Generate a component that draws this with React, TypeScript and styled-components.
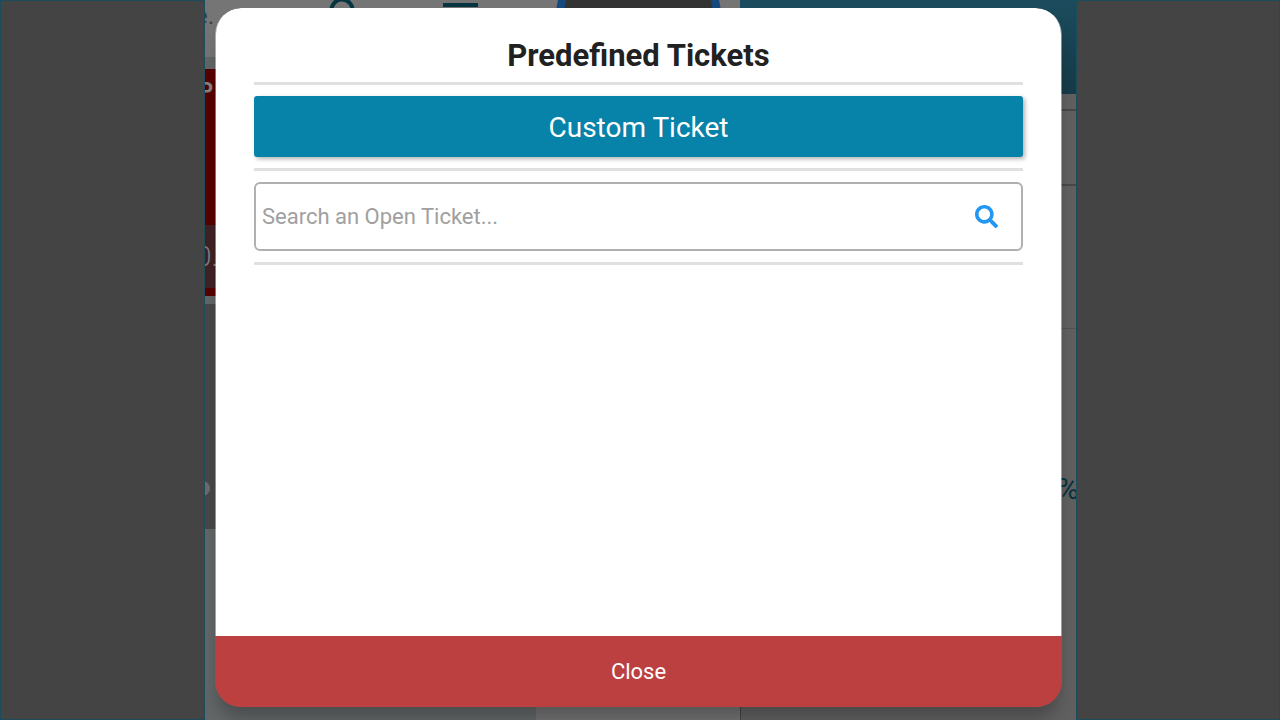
import React from "react";
import styled, { createGlobalStyle } from "styled-components";
import { FaSearch } from "react-icons/fa";

const GlobalStyle = createGlobalStyle`
  *, *::before, *::after { box-sizing: border-box; }
  body { margin: 0; font-family: Roboto, "Liberation Sans", sans-serif; }
  button, input { font-family: inherit; }
`;

const Screen = styled.div`
  display: grid;
  grid-template-columns: 205px 1fr 204px;
  height: 100vh;
  min-height: 420px;
  overflow: hidden;
`;

const Bezel = styled.div`
  background: #444;
  border: 1px solid #1b4c5b;
`;

const Frame = styled.div`
  position: relative;
  display: grid;
  min-width: 0;
  overflow: hidden;
`;

const Register = styled.main`
  display: grid;
  grid-template-columns: 1fr 336px;
  min-width: 0;
  overflow: hidden;
`;

const Catalog = styled.section`
  display: flex;
  flex-direction: column;
  margin-left: -16px;
  min-width: 0;
  background: #626666;
`;

const CatalogHeader = styled.header`
  display: flex;
  flex: none;
  height: 57px;
  margin-bottom: 12px;
  padding-left: 6px;
  background: #757575;
  color: #3c3f40;
  font-size: 24px;
  line-height: 32px;
`;

const HeaderIcons = styled.svg`
  flex: none;
  width: 410px;
  height: 57px;
  margin-left: 110px;
`;

const ProductCard = styled.article`
  flex: none;
  height: 227px;
  margin-bottom: 8px;
  background: #580000;
  color: #858585;
`;

const ProductName = styled.div`
  height: 156px;
  padding: 8px 10px;
  font-size: 22px;
  font-weight: 700;
  line-height: 28px;
`;

const ProductPrice = styled.div`
  height: 63px;
  padding-left: 7px;
  background: #402225;
  color: #808080;
  font-size: 28px;
  font-weight: 300;
  line-height: 64px;
`;

const OptionCard = styled.article`
  flex: none;
  height: 225px;
  padding: 177px 6px 0;
  background: #484848;
`;

const Knob = styled.div`
  width: 15px;
  height: 15px;
  border-radius: 8px;
  background: #6c6c6c;
`;

const CatalogFooter = styled.footer`
  flex: none;
  width: 204px;
  height: 24px;
  margin-top: auto;
  align-self: flex-end;
  background: #727272;
`;

const Order = styled.section`
  display: flex;
  flex-direction: column;
  background: #606060;
  border-left: 1px solid #444;
`;

const OrderHeader = styled.header`
  flex: none;
  height: 94px;
  margin-left: -1px;
  background: linear-gradient(#1b4c5d, #163a48);
`;

const OrderRow = styled.div<{ $height: number; $faint?: boolean }>`
  flex: none;
  height: ${(p) => p.$height}px;
  border-bottom: ${(p) => (p.$faint ? "1px solid #525252" : "2px solid #484848")};
`;

const Discount = styled.div`
  padding-top: 144px;
  margin-right: -3px;
  color: #06313c;
  font-size: 30px;
  line-height: 32px;
  text-align: right;
`;

const Overlay = styled.div`
  position: absolute;
  inset: 0;
  display: flex;
  padding: 8px 14px 13px 10px;
`;

const Dialog = styled.div`
  flex: 1;
  display: flex;
  flex-direction: column;
  min-width: 0;
  overflow: hidden;
  border-radius: 26px;
  box-shadow: 0 14px 16px -3px rgba(0, 0, 0, 0.24);
`;

const DialogBody = styled.div`
  flex: 1;
  display: flex;
  flex-direction: column;
  gap: 11px;
  padding: 29px 38px 0;
  background: #fff;
  background-clip: padding-box;
  border: solid rgba(255, 255, 255, 0.4);
  border-width: 0 1px;
  border-radius: 26px 26px 0 0;
`;

const Title = styled.h1`
  margin: 0 0 -4px;
  color: #212121;
  font-size: 31px;
  font-weight: 700;
  line-height: 38px;
  text-align: center;
`;

const Rule = styled.hr`
  width: 100%;
  height: 3px;
  margin: 0;
  border: 0;
  background: #e0e0e0;
`;

const CustomButton = styled.button`
  height: 61px;
  padding: 2px 0 0;
  border: 0;
  border-radius: 3px;
  background: #0782a8;
  box-shadow: 2px 2px 4px rgba(0, 0, 0, 0.3);
  color: #fff;
  font-size: 28px;
  line-height: 34px;
`;

const SearchBox = styled.label`
  display: flex;
  align-items: center;
  height: 69px;
  padding: 0 23px 0 6px;
  border: 2px solid #b0b0b0;
  border-radius: 6px;
  color: #2196f3;
`;

const SearchInput = styled.input`
  flex: 1;
  min-width: 0;
  padding: 0;
  border: 0;
  outline: 0;
  background: transparent;
  color: #212121;
  font-size: 22px;
  line-height: 26px;
  &::placeholder { color: #a0a0a0; opacity: 1; }
`;

const CloseButton = styled.button`
  flex: none;
  height: 71px;
  padding: 0;
  border: 0;
  background: #bc403f;
  color: #fff;
  font-size: 22px;
  line-height: 26px;
`;

export default function App() {
  return (
    <>
      <GlobalStyle />
      <Screen>
        <Bezel />
        <Frame>
          <Register aria-hidden="true">
            <Catalog>
              <CatalogHeader>
                e.
                <HeaderIcons viewBox="0 0 410 57">
                  <circle cx="18" cy="10" r="10.5" fill="none" stroke="#063440" strokeWidth="4" />
                  <path d="M119 3h35v4h-35z" fill="#063440" />
                  <circle cx="314.5" cy="20" r="79" fill="#333" stroke="#13497c" strokeWidth="8" />
                </HeaderIcons>
              </CatalogHeader>
              <ProductCard>
                <ProductName>P</ProductName>
                <ProductPrice>0.</ProductPrice>
              </ProductCard>
              <OptionCard>
                <Knob />
              </OptionCard>
              <CatalogFooter />
            </Catalog>
            <Order>
              <OrderHeader />
              <OrderRow $height={17} />
              <OrderRow $height={75} />
              <OrderRow $height={143} $faint />
              <Discount>%</Discount>
            </Order>
          </Register>
          <Overlay>
            <Dialog role="dialog" aria-modal="true" aria-labelledby="tickets-title">
              <DialogBody>
                <Title id="tickets-title">Predefined Tickets</Title>
                <Rule />
                <CustomButton type="button">Custom Ticket</CustomButton>
                <Rule />
                <SearchBox>
                  <SearchInput
                    type="text"
                    aria-label="Search an open ticket"
                    placeholder="Search an Open Ticket..."
                  />
                  <FaSearch size={23} />
                </SearchBox>
                <Rule />
              </DialogBody>
              <CloseButton type="button">Close</CloseButton>
            </Dialog>
          </Overlay>
        </Frame>
        <Bezel />
      </Screen>
    </>
  );
}
